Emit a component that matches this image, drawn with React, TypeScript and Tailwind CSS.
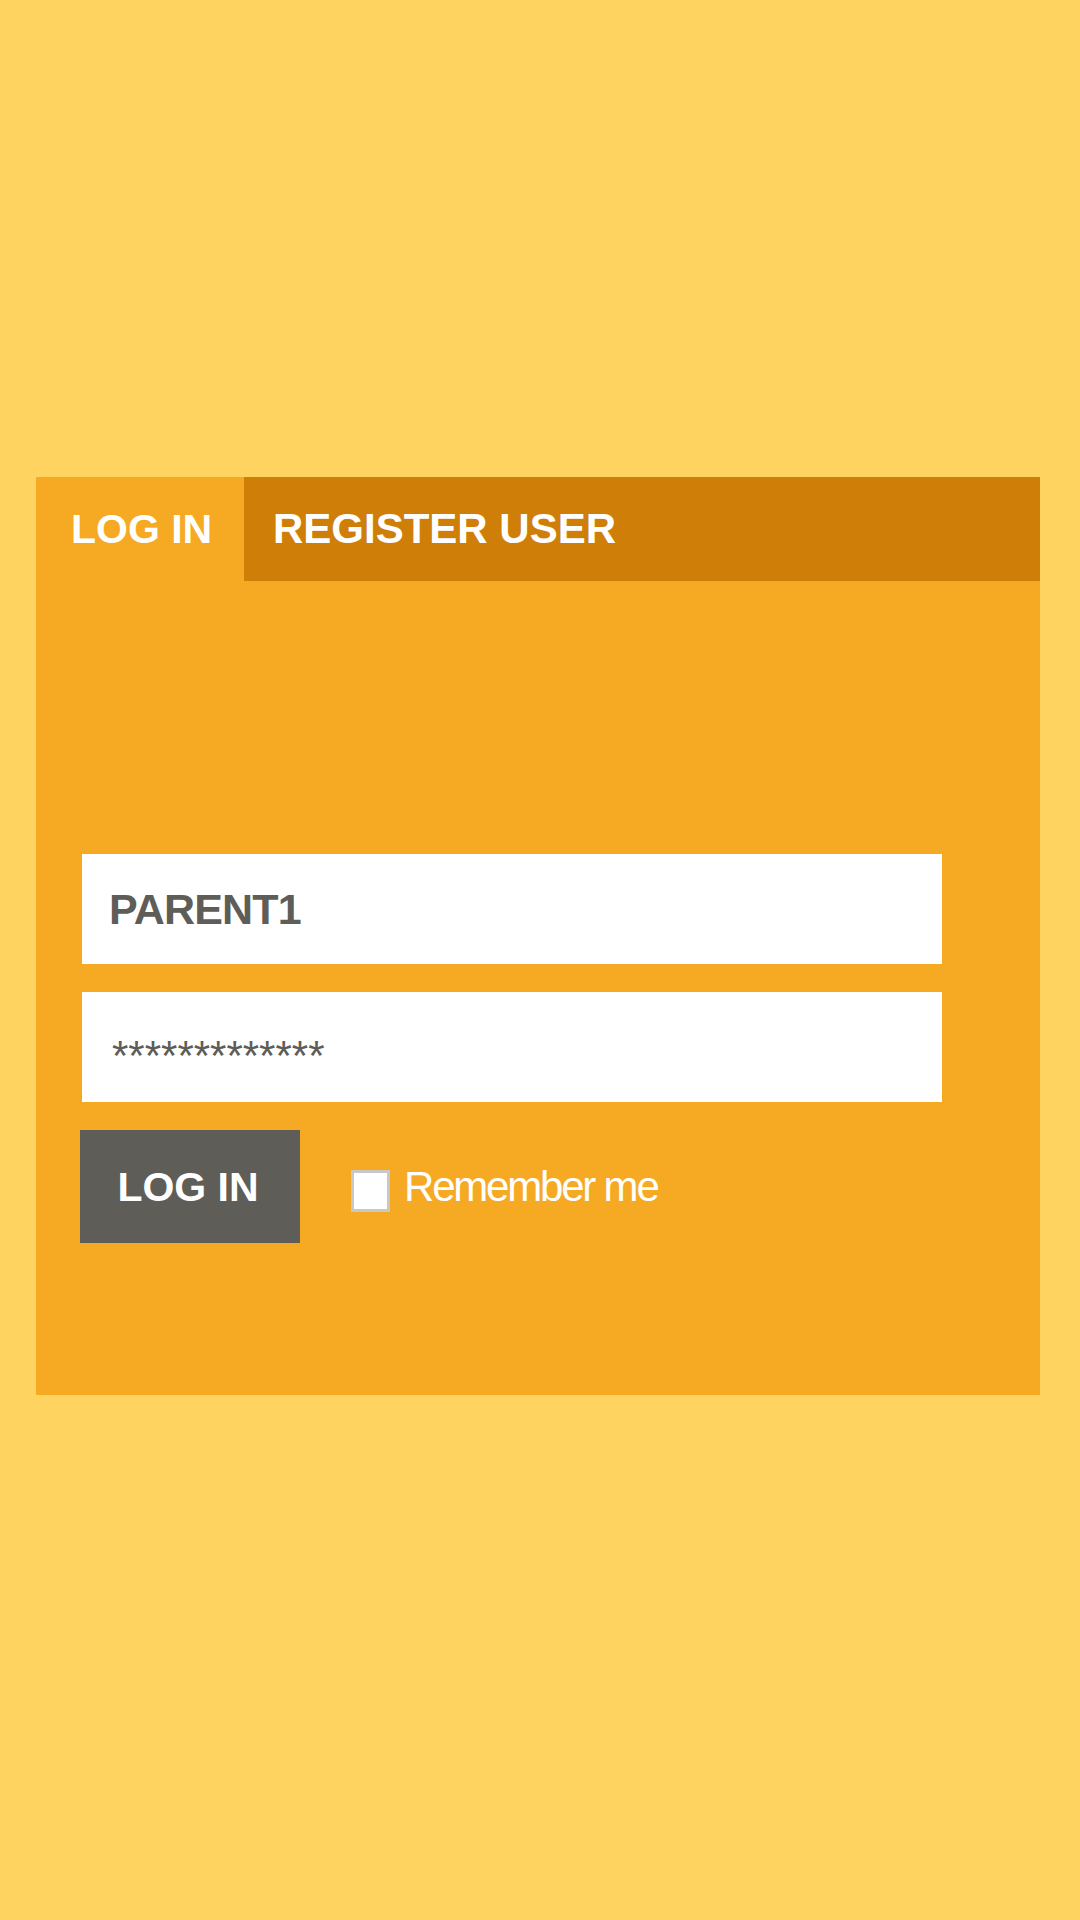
export default function App() {
  return (
    <div
      className="min-h-[1920px] w-[1080px] bg-[#ffd360] pt-[477px] pl-[36px]"
      style={{ fontFamily: '"Liberation Sans", Arial, sans-serif' }}
    >
      <div className="w-[1004px] bg-[#f6a922]">
        {/* tabs */}
        <div className="flex h-[104px]">
          <div className="flex w-[208px] items-center pl-[35px] text-[41px] font-bold leading-none text-white">
            LOG IN
          </div>
          <div className="flex flex-1 items-center bg-[#cf7e08] pl-[29px] text-[42px] font-bold leading-none text-white">
            REGISTER USER
          </div>
        </div>

        <div className="pl-[46px] pt-[273px] pb-[152px]">
          <div className="flex h-[110px] w-[860px] items-center bg-white pl-[27px] text-[43px] font-bold leading-none tracking-[-0.8px] text-[#5e5d58]">
            PARENT1
          </div>
          <div className="mt-[28px] flex h-[110px] w-[860px] items-center bg-white pl-[30px] pt-[18px] text-[42px] leading-none text-[#5e5d58]">
            *************
          </div>

          <div className="-ml-[2px] mt-[28px] flex items-center">
            <button className="flex h-[113px] w-[220px] items-center justify-center bg-[#5e5d58] pt-[2px] pr-[4px] text-[41px] font-bold leading-none text-white">
              LOG IN
            </button>
            <label className="ml-[51px] flex items-center">
              <span className="mt-[8px] block h-[42px] w-[39px] border-[3px] border-[#c8c8c8] bg-white" />
              <span className="ml-[14px] text-[42px] leading-none tracking-[-2.2px] text-white">
                Remember me
              </span>
            </label>
          </div>
        </div>
      </div>
    </div>
  );
}
